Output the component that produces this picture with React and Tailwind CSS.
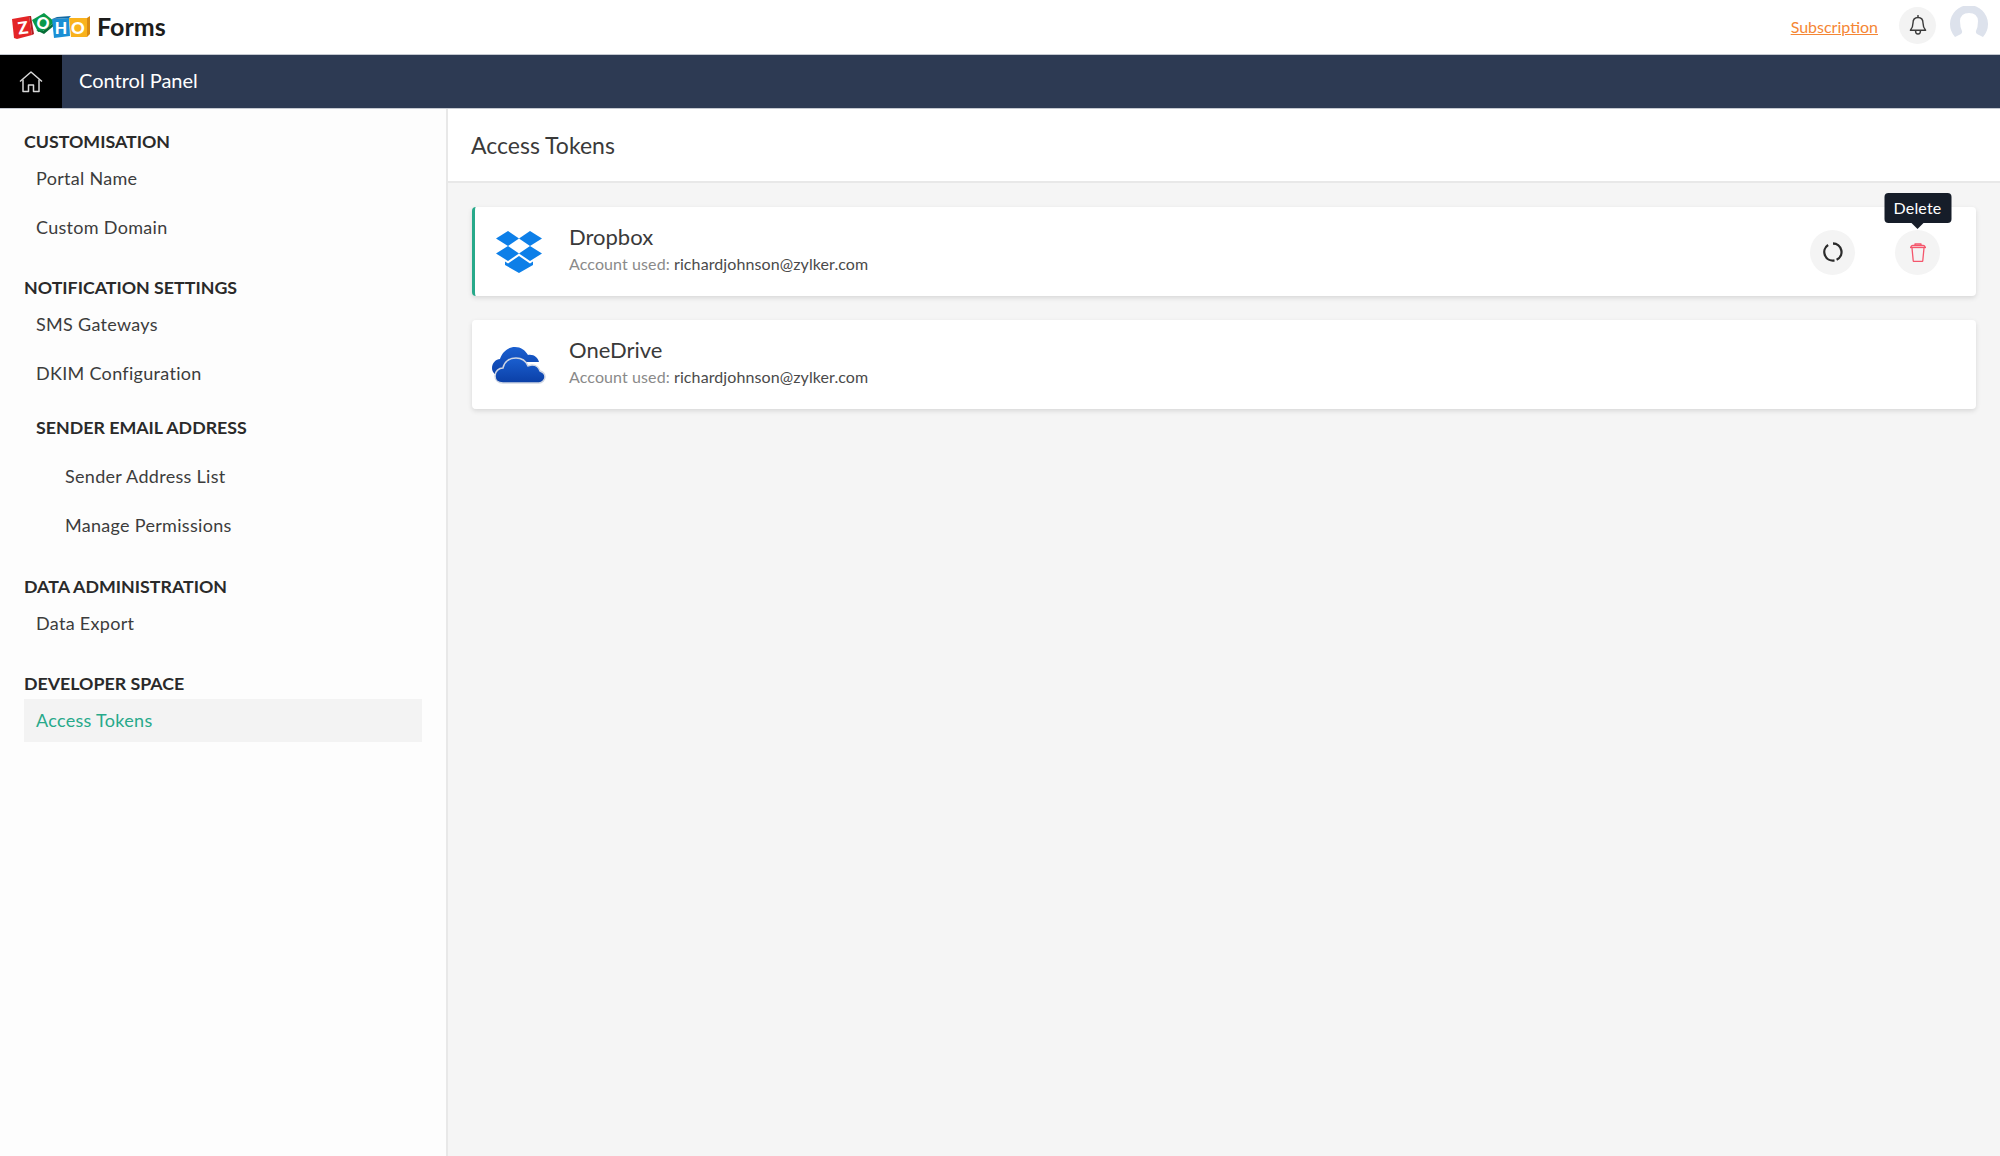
const font = { fontFamily: 'Lato' };

const ZohoLogo = () => (
    <svg width="80" height="28" viewBox="0 0 80 28" className="block">
        {/* Z */}
        <polygon points="1,6 18,3 21,22 6,26 3,25" fill="#e42527" />
        <polygon points="18,3 20,3 23,21 21,22" fill="#b01c22" />
        <text x="12" y="21" fontSize="17" fontWeight="900" fill="#fff" textAnchor="middle" transform="rotate(-8 11 15)" fontFamily="Lato">Z</text>
        {/* O */}
        <polygon points="21,7 33,0 44,9 32,18 27,19" fill="#089949" />
        <polygon points="25,17 32,18 44,9 45,11 33,21" fill="#066d36" />
        <text x="32" y="16" fontSize="16" fontWeight="900" fill="#fff" textAnchor="middle" transform="rotate(15 32 10)" fontFamily="Lato">O</text>
        {/* H */}
        <polygon points="41,6 58,5 59,23 43,25" fill="#1a8fd5" />
        <polygon points="41,6 46,4 60,3 58,5" fill="#136aa3" />
        <text x="50" y="21" fontSize="16" fontWeight="900" fill="#fff" textAnchor="middle" fontFamily="Lato">H</text>
        {/* O */}
        <polygon points="58,5 76,5 76,24 60,24" fill="#f9b21d" />
        <polygon points="76,5 79,3 79,21 76,24" fill="#d88a12" />
        <text x="67" y="21" fontSize="17" fontWeight="900" fill="#fff" textAnchor="middle" fontFamily="Lato">O</text>
    </svg>
);

const HomeIcon = () => (
    <svg width="24" height="22" viewBox="0 0 24 22" fill="none" stroke="#d8d8d8" strokeWidth="1.5" strokeLinejoin="round">
        <path d="M1 10.500 12 1l11 9.500" />
        <path d="M4 8.500V20.500h5.500v-6.500h5v6.500H20V8.500" />
    </svg>
);

const BellIcon = () => (
    <svg width="18" height="23" viewBox="0 0 18 23" fill="none" stroke="#3a3a3a" strokeWidth="1.400" strokeLinejoin="round">
        <path d="M9 1v2.500" />
        <path d="M9 3.500c-3.400 0-5 2.600-5 5.500 0 3.600-.8 5.200-2.600 7.200h15.200C14.800 14.200 14 12.600 14 9c0-2.900-1.600-5.500-5-5.500Z" />
        <path d="M6.500 16.500c0 2.200 1.100 3.500 2.500 3.500s2.500-1.300 2.500-3.500" />
    </svg>
);

const Avatar = () => (
    <svg width="38" height="32" viewBox="0 0 38 32">
        <path d="M5 31A19 19 0 1 1 33 31L27 28Q25.500 26.500 26 25 28 21 28 15 27.500 7 19 7 10.500 7 10 15 10 21 12 25 12.500 26.500 11 28Z" fill="#dde2ec" />
    </svg>
);

const DropboxIcon = () => (
    <svg width="46" height="42" viewBox="0 0 46 42" fill="#0d7fe8">
        <polygon points="12,0 23,7.500 12,15 0,7.500" />
        <polygon points="34,0 46,7.500 34,15 23,7.500" />
        <polygon points="0,22.500 12,15 23,22.500 12,30" />
        <polygon points="46,22.500 34,15 23,22.500 34,30" />
        <polygon points="9,30.500 12,32.500 23,25 34,32.500 37,30.500 37,34 23,42 9,34" />
    </svg>
);

const OneDriveIcon = () => (
    <svg width="54" height="38" viewBox="0 0 54 38">
        <defs>
            <linearGradient id="od" x1="0" y1="0" x2="0" y2="1">
                <stop offset="0" stopColor="#1a5fd0" />
                <stop offset="1" stopColor="#0b3fa6" />
            </linearGradient>
        </defs>
        <path d="M9 30C3 30 0 26 0 22c0-5 4-9 8-9 2-7 8-12 15-12 6 0 10 3 13 8 6-1 10 3 11 7H24c-6 0-9 4-10 14Z" fill="url(#od)" />
        <path d="M12 37c-5 0-8-3-8-7 0-5 4-8 8-8 1-6 6-10 13-10 6 0 10 3 12 8 1 0 2-1 4-1 4 0 7 3 8 6 3 1 5 3 5 6s-3 6-6 6Z" fill="url(#od)" stroke="#cfd6e4" strokeWidth="1.500" transform="translate(-1 0)" />
    </svg>
);

const TrashIcon = () => (
    <svg width="18" height="19" viewBox="0 0 18 19" fill="none" stroke="#f4566c" strokeWidth="1.300" strokeLinejoin="round">
        <path d="M1 4.500h16" />
        <path d="M2 4.500c0-1.200.8-2 2-2h10c1.200 0 2 .8 2 2" />
        <path d="M6 2.500V1h6v1.500" />
        <path d="M3 5l1.200 12.500c0 .5.400 1 1 1h7.600c.6 0 1-.5 1-1L15 5" />
    </svg>
);

const SpinIcon = () => (
    <svg width="20" height="20" viewBox="0 0 20 20" fill="none" stroke="#2b2b2b" strokeWidth="2.300">
        <path d="M10 1.500A8.500 8.500 0 0 1 13.600 17.700" />
        <path d="M11.500 18.400A8.500 8.500 0 0 1 5.100 3" />
    </svg>
);

const Heading = ({ children, className = '' }) => (
    <h3 className={`text-[17.8px] leading-6 font-bold text-[#2a2a2a] ${className}`}>{children}</h3>
);

const Item = ({ label, active, nested }) => (
    <div
        className={`flex items-center h-[43px] text-[18px] tracking-[0.3px] ${nested ? 'pl-[41px]' : 'pl-3'} ${
            active ? 'bg-[#f3f3f3] text-[#27a98a]' : 'text-[#3c3c3c]'
        }`}
    >
        {label}
    </div>
);

const TokenCard = ({ icon, name, selected, children }) => (
    <div
        className={`relative flex items-center h-[89px] bg-white rounded shadow-[0_2px_5px_rgba(0,0,0,0.12)] border-l-[3px] ${
            selected ? 'border-[#27a98a]' : 'border-white'
        }`}
    >
        <div className="w-[85px] mr-[9px] flex justify-center pl-[2px]">{icon}</div>
        <div className="flex-1 pb-[5px]">
            <p className="text-[22px] leading-7 text-[#3a3a3a]">{name}</p>
            <p className="text-[16px] tracking-[0.1px] leading-6 mt-px text-[#8a8a8a]">
                Account used: <span className="text-[#4a4a4a]">richardjohnson@zylker.com</span>
            </p>
        </div>
        {children}
    </div>
);

export default function App() {
    return (
        <div className="flex flex-col h-[1156px] w-[2000px] overflow-hidden bg-[#f5f5f5]" style={font}>
            {/* top header */}
            <header className="flex items-center h-[54px] bg-white pl-[11px] pr-[12px] shrink-0">
                <ZohoLogo />
                <span className="ml-1.5 text-[25px] font-bold text-[#1c1c1c]">Forms</span>
                <a className="ml-auto text-[16px] text-[#f58634] underline">Subscription</a>
                <div className="ml-[21px] mb-1 flex items-center justify-center w-[37px] h-[37px] rounded-full bg-[#f3f3f3]">
                    <BellIcon />
                </div>
                <div className="ml-[14px] mb-[10px]">
                    <Avatar />
                </div>
            </header>

            {/* title bar */}
            <div className="flex items-center h-[55px] bg-[#2d3a53] border-y border-[#c4c8d0] shrink-0">
                <div className="flex items-center justify-center w-[62px] h-full bg-black">
                    <HomeIcon />
                </div>
                <span className="ml-[17px] pb-[3px] text-[20px] text-white">Control Panel</span>
            </div>

            <div className="flex flex-1 min-h-0">
                {/* sidebar */}
                <aside className="w-[448px] shrink-0 bg-[#fdfdfd] border-r-2 border-[#e8e8e8] pt-5 px-6">
                    <Heading>CUSTOMISATION</Heading>
                    <div className="mt-1 flex flex-col gap-1.5">
                        <Item label="Portal Name" />
                        <Item label="Custom Domain" />
                    </div>

                    <Heading className="mt-[26px]">NOTIFICATION SETTINGS</Heading>
                    <div className="mt-1 flex flex-col gap-1.5">
                        <Item label="SMS Gateways" />
                        <Item label="DKIM Configuration" />
                    </div>
                    <Heading className="mt-5 pl-3">SENDER EMAIL ADDRESS</Heading>
                    <div className="mt-4 flex flex-col gap-1.5">
                        <Item label="Sender Address List" nested />
                        <Item label="Manage Permissions" nested />
                    </div>

                    <Heading className="mt-[27px]">DATA ADMINISTRATION</Heading>
                    <div className="mt-1">
                        <Item label="Data Export" />
                    </div>

                    <Heading className="mt-[26px]">DEVELOPER SPACE</Heading>
                    <div className="mt-1">
                        <Item label="Access Tokens" active />
                    </div>
                </aside>

                {/* main */}
                <main className="flex-1 min-w-0">
                    <div className="flex items-center h-[74px] bg-white border-b-2 border-[#e8e8e8] px-[23px]">
                        <h1 className="text-[23px] text-[#3a3a3a]">Access Tokens</h1>
                    </div>
                    <div className="flex flex-col gap-6 p-6">
                        <TokenCard icon={<DropboxIcon />} name="Dropbox" selected>
                            <div className="flex gap-[40px] pr-[36px] mt-px">
                                <button className="flex items-center justify-center w-[45px] h-[45px] rounded-full bg-[#f4f4f4]">
                                    <SpinIcon />
                                </button>
                                <div className="relative">
                                    <button className="flex items-center justify-center w-[45px] h-[45px] rounded-full bg-[#f4f4f4]">
                                        <TrashIcon />
                                    </button>
                                    {/* tooltip */}
                                    <div className="absolute left-1/2 -translate-x-1/2 -top-[37px] w-[67px] h-[30px] flex items-center justify-center rounded bg-[#161d29] text-[16px] tracking-[0.2px] text-white">
                                        Delete
                                        <span className="absolute left-1/2 -translate-x-1/2 -bottom-[6px] w-0 h-0 border-x-[6px] border-x-transparent border-t-[6px] border-t-[#161d29]" />
                                    </div>
                                </div>
                            </div>
                        </TokenCard>
                        <TokenCard icon={<OneDriveIcon />} name="OneDrive" />
                    </div>
                </main>
            </div>
        </div>
    );
}
